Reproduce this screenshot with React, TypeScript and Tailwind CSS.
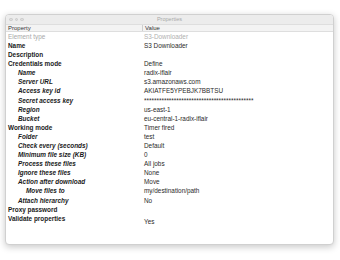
import React from 'react';

type Row = {
  label: string;
  value?: string;
  level?: 0 | 1 | 2;
  muted?: boolean;
};

const rows: Row[] = [
  { label: 'Element type', value: 'S3-Downloader', muted: true },
  { label: 'Name', value: 'S3 Downloader' },
  { label: 'Description' },
  { label: 'Credentials mode', value: 'Define' },
  { label: 'Name', value: 'radix-iflair', level: 1 },
  { label: 'Server URL', value: 's3.amazonaws.com', level: 1 },
  { label: 'Access key id', value: 'AKIATFE5YPEBJK7BBTSU', level: 1 },
  { label: 'Secret access key', value: '*'.repeat(44), level: 1 },
  { label: 'Region', value: 'us-east-1', level: 1 },
  { label: 'Bucket', value: 'eu-central-1-radix-iflair', level: 1 },
  { label: 'Working mode', value: 'Timer fired' },
  { label: 'Folder', value: 'test', level: 1 },
  { label: 'Check every (seconds)', value: 'Default', level: 1 },
  { label: 'Minimum file size (KB)', value: '0', level: 1 },
  { label: 'Process these files', value: 'All jobs', level: 1 },
  { label: 'Ignore these files', value: 'None', level: 1 },
  { label: 'Action after download', value: 'Move', level: 1 },
  { label: 'Move files to', value: 'my/destination/path', level: 2 },
  { label: 'Attach hierarchy', value: 'No', level: 1 },
  { label: 'Proxy password' },
];

const indent = ['pl-[2px]', 'pl-[12px] italic', 'pl-[20px] italic'];

export default function App() {
  return (
    <div className="w-[340px] h-[260px] bg-white pt-[14px] pl-[5px] font-['Liberation_Sans',Arial,sans-serif]">
      <div className="w-[329px] h-[231px] rounded-[4px] border border-[#d0d0d0] bg-white shadow-[0_2px_7px_rgba(0,0,0,0.22)] overflow-hidden flex flex-col">
        {/* title bar */}
        <div className="relative h-[9px] bg-[#ececec] flex items-center justify-center">
          <div className="absolute left-[3px] top-[2.5px] flex gap-[2px]">
            <span className="w-[3.5px] h-[3.5px] rounded-full border-[0.5px] border-[#c8c8c8] bg-[#dcdcdc]" />
            <span className="w-[3.5px] h-[3.5px] rounded-full border-[0.5px] border-[#c8c8c8] bg-[#dcdcdc]" />
            <span className="w-[3.5px] h-[3.5px] rounded-full border-[0.5px] border-[#c8c8c8] bg-[#dcdcdc]" />
          </div>
          <span className="text-[5.5px] text-[#a8a8a8] leading-none">Properties</span>
        </div>
        {/* header */}
        <div className="flex h-[8px] bg-[#f3f3f3] border-t border-b border-[#dedede] text-[6px] text-[#333] leading-none items-center">
          <div className="w-[137px] pl-[2px] border-r border-[#cfcfcf]">Property</div>
          <div className="pl-[2px]">Value</div>
        </div>
        {/* rows */}
        <div className="pt-[0.5px] text-[6.4px] leading-none">
          {rows.map((row, i) => (
            <div key={i} className="flex h-[9.1px] items-center">
              <div
                className={`w-[138px] shrink-0 ${indent[row.level ?? 0]} ${
                  row.muted ? 'text-[#a9a9a9]' : 'font-bold text-[#1a1a1a]'
                }`}
              >
                {row.label}
              </div>
              <div className={`whitespace-nowrap ${row.muted ? 'text-[#b0b0b0]' : 'text-[#2a2a2a]'}`}>
                {row.value}
              </div>
            </div>
          ))}
          <div className="flex h-[14px]">
            <div className="w-[138px] shrink-0 pl-[2px] pt-[2px] font-bold text-[#1a1a1a]">Validate properties</div>
            <div className="pt-[5px] text-[#2a2a2a]">Yes</div>
          </div>
        </div>
      </div>
    </div>
  );
}
